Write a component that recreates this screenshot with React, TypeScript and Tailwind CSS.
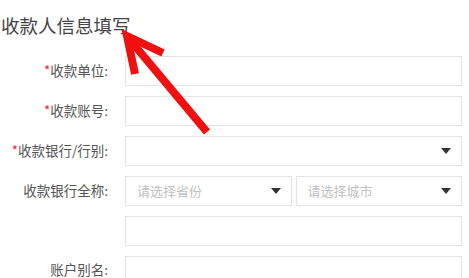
import React from "react"

const font = { fontFamily: '"Noto Sans CJK SC", "Noto Sans", sans-serif' }

function Caret() {
  return (
    <svg width="10" height="6" viewBox="0 0 10 6" className="shrink-0">
      <path d="M0 0 H10 L5 6 Z" fill="#333" />
    </svg>
  )
}

function Row({
  label,
  required,
  last,
  children,
}: {
  label: string
  required?: boolean
  last?: boolean
  children: React.ReactNode
}) {
  return (
    <div className={last ? "flex items-center h-[27px] mb-[10px]" : "flex items-center h-[30px] mb-[10px]"}>
      <div className="w-[108px] shrink-0 text-right text-[13.5px] text-[#555] leading-none">
        {required && <span className="text-[#d9263b]">*</span>}
        {label}
      </div>
      <div className="ml-[17px] w-[337px] h-[30px] self-start flex gap-[4px]">{children}</div>
    </div>
  )
}

function Box({ placeholder, select }: { placeholder?: string; select?: boolean }) {
  return (
    <div className="flex-1 h-full border border-[#e3e3e3] bg-white flex items-center justify-between pl-[11px] pr-[10px]">
      <span className="text-[13px] text-[#c2c2c2]">{placeholder}</span>
      {select && <Caret />}
    </div>
  )
}

export default function App() {
  return (
    <div className="relative w-[469px] h-[278px] overflow-hidden bg-white" style={font}>
      <h2 className="pl-[1px] pt-[12px] h-[56px] text-[18.5px] text-[#444] leading-[26px] font-normal">
        收款人信息填写
      </h2>
      <Row label="收款单位:" required>
        <Box />
      </Row>
      <Row label="收款账号:" required>
        <Box />
      </Row>
      <Row label="收款银行/行别:" required>
        <Box select />
      </Row>
      <Row label="收款银行全称:">
        <Box placeholder="请选择省份" select />
        <Box placeholder="请选择城市" select />
      </Row>
      <Row label="">
        <Box />
      </Row>
      <Row label="账户别名:" last>
        <Box />
      </Row>

      <svg className="absolute left-0 top-0 pointer-events-none" width="469" height="278" viewBox="0 0 469 278">
        <g stroke="#f01010" strokeWidth="8" strokeLinecap="butt" strokeLinejoin="miter" fill="none">
          <line x1="207" y1="132" x2="130" y2="40" />
          <polyline points="163,53 127,36 135,74" />
        </g>
      </svg>
    </div>
  )
}
